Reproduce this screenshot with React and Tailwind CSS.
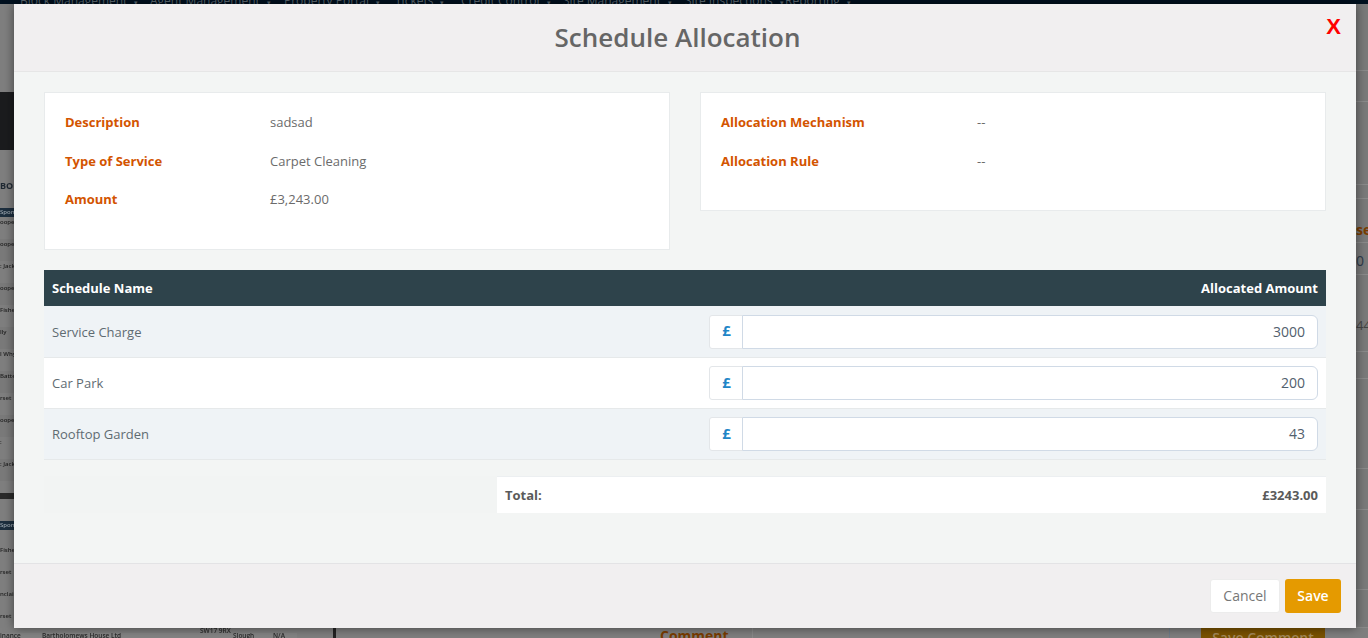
const labelClass = "text-[13px] font-bold text-[#d35400]";
const valueClass = "text-[13px] text-[#6b6b6b]";

const leftInfo = [
  ["Description", "sadsad", "h-[39px]"],
  ["Type of Service", "Carpet Cleaning", "h-[39px]"],
  ["Amount", "£3,243.00", "h-[38px]"],
];

const rightInfo = [
  ["Allocation Mechanism", "--", "h-[39px]"],
  ["Allocation Rule", "--", "h-[39px]"],
];

const schedules = [
  { name: "Service Charge", amount: "3000", bg: "bg-[#eff3f6]", h: "h-[52px]" },
  { name: "Car Park", amount: "200", bg: "bg-white", h: "h-[51px]" },
  { name: "Rooftop Garden", amount: "43", bg: "bg-[#eff3f6]", h: "h-[51px]" },
];

const navItems = [
  ["Block Management", "w-[130px]"],
  ["Agent Management", "w-[134px]"],
  ["Property Portal", "w-[111px]"],
  ["Tickets", "w-[66px]"],
  ["Credit Control", "w-[102px]"],
  ["Site Management", "w-[122px]"],
  ["Site Inspections", "w-[100px]"],
  ["Reporting", "w-[80px]"],
];

const firstRows = ["ooper", "ooper", ": Jack", "ooper", "Fisher", "lly", "l Whyt", "Batten", "rset", "ooper", ":", ": Jack"];
const secondRows = ["Fisher", "rset", "nclair", "rset"];

// right hand strip of the page behind the modal
const rightBands = [
  { h: "h-[67px]" },
  { h: "h-[31px]" },
  { h: "h-[83px]" },
  { h: "h-[14px]" },
  { h: "h-[44px]", text: "se", cls: "font-bold text-[14px] text-[#7a3c00] pt-[23px]" },
  { h: "h-[32px]", text: "0", cls: "text-[14px] text-[#2d3a4a] pt-[10px]" },
  { h: "h-[77px]", text: "44", cls: "text-[13px] text-[#444] pt-[42px]" },
  { h: "h-[27px]" },
  { h: "h-[90px]" },
  { h: "h-[41px]" },
  { h: "h-[80px]" },
  { h: "h-[38px]" },
];

const Backdrop = () => (
  <div className="h-full flex flex-col bg-[#7f7f7f]">
    <div className="h-1 shrink-0 bg-[#00101f] overflow-hidden pl-5 flex text-xs leading-[1px] text-[#5f6a73] whitespace-nowrap">
      {navItems.map(([item, width]) => (
        <span key={item} className={`${width} shrink-0`}>
          {item}
          <span className="ml-[7px] text-[7px]">▾</span>
        </span>
      ))}
    </div>

    <div className="h-[624px] shrink-0 flex justify-between">
      <div className="w-[14px] overflow-hidden text-[6px] font-semibold text-[#222] whitespace-nowrap blur-[0.4px]">
        <div className="h-[58px] mt-[88px] bg-[#1b1c1e]"></div>
        <div className="mt-[30px] text-[9px] font-bold leading-3 text-[#1f2933]">BOL</div>
        <div className="mt-[16px] h-[9px] bg-[#1d2f3f] text-[#9aa5ae] leading-[9px]">Spons</div>
        {firstRows.map((row, i) => (
          <div key={i} className={`h-[22px] leading-[6px] pt-[2px] ${i % 2 ? "bg-[#7a7a7a]" : ""}`}>{row}</div>
        ))}
        <div className="mt-[12px] h-[6px] bg-[#2a2a2a]"></div>
        <div className="mt-[22px] h-[9px] bg-[#1d2f3f] text-[#9aa5ae] leading-[9px]">Spons</div>
        {secondRows.map((row, i) => (
          <div key={i} className="h-[22px] leading-[6px] pt-[17px]">{row}</div>
        ))}
      </div>

      <div className="w-3 overflow-hidden whitespace-nowrap bg-[#7a7a7a]">
        {rightBands.map((band, i) => (
          <div key={i} className={`${band.h} ${band.cls || ""} leading-4 border-b border-[#8b8b8b]`}>{band.text}</div>
        ))}
      </div>
    </div>

    <div className="h-[10px] shrink-0 flex overflow-hidden whitespace-nowrap">
      <div className="w-[333px] shrink-0 text-[6.5px] font-semibold text-[#2a2a2a] blur-[0.4px]">
        <div className="h-[5px] pl-[200px] leading-[5px]">SW17 9RX</div>
        <div className="h-[5px] w-[297px] bg-[#848484] flex leading-[6px]">
          <span className="w-[42px]">inance</span>
          <span className="w-[191px]">Bartholomews House Ltd</span>
          <span className="w-10">Slough</span>
          <span>N/A</span>
        </div>
      </div>
      <div className="w-[3px] shrink-0 bg-[#222]"></div>
      <div className="w-[417px] shrink-0 pl-[324px] -mt-[2px] text-sm font-bold leading-5 text-[#7a3c00] border-r border-[#8a8a8a]">
        Comment
      </div>
      <div className="w-[417px] shrink-0 border-r border-[#6f7c88]"></div>
      <div className="ml-[31px] w-[124px] shrink-0 bg-[#7a5200] text-center text-sm font-semibold leading-5 text-[#a58a5c]">
        Save Comment
      </div>
    </div>
  </div>
);

const InfoCard = ({ rows, labelWidth, height }) => (
  <div className={`w-[626px] ${height} bg-white border border-[#e8ebec] pl-5 pt-[10px]`}>
    {rows.map(([label, value, rowHeight]) => (
      <div key={label} className={`flex items-center ${rowHeight}`}>
        <div className={`${labelWidth} ${labelClass}`}>{label}</div>
        <div className={valueClass}>{value}</div>
      </div>
    ))}
  </div>
);

const ScheduleRow = ({ row }) => (
  <div className={`${row.h} ${row.bg} border-b border-[#e6e9ea] flex items-center justify-between pl-2 pr-2`}>
    <span className="pt-[2px] text-[13px] text-[#5f6b72]">{row.name}</span>
    <div className="flex w-[609px] h-[34px]">
      <div className="w-[34px] shrink-0 pb-[2px] pl-px bg-white border border-[#e3e6e9] rounded-l-[3px] flex items-center justify-center text-[15px] font-bold text-[#1f86c7]">
        £
      </div>
      <input
        readOnly
        value={row.amount}
        className="flex-1 min-w-0 -ml-px bg-white border border-[#d0dae6] rounded-r-[6px] px-3 text-right text-sm text-[#52606d] outline-none"
      />
    </div>
  </div>
);

const App = () => {
  return (
    <div className="relative h-screen overflow-hidden font-['Open_Sans',sans-serif]">
      <Backdrop />
      <div className="absolute left-[14px] top-1 w-[1342px] h-[624px] flex flex-col bg-[#f3f5f4] shadow-[0_0_10px_rgba(0,0,0,0.5)]">
        <div className="relative h-[68px] shrink-0 flex items-center justify-center pr-[15px] bg-[#f1eff0] border-b border-[#e6e6e6]">
          <h2 className="text-[26px] font-semibold text-[#666]">Schedule Allocation</h2>
          <button className="absolute right-[15px] top-[9px] text-[22px] leading-7 font-bold text-[#ff0000] font-['Liberation_Sans',sans-serif]">
            X
          </button>
        </div>

        <div className="flex-1 px-[30px] pt-5">
          <div className="flex items-start justify-between">
            <InfoCard rows={leftInfo} labelWidth="w-[205px]" height="h-[158px]" />
            <InfoCard rows={rightInfo} labelWidth="w-[256px]" height="h-[119px]" />
          </div>

          <div className="mt-5 h-9 pt-[2px] bg-[#2e434b] flex items-center justify-between px-2 text-[13px] font-bold text-white">
            <span>Schedule Name</span>
            <span>Allocated Amount</span>
          </div>
          {schedules.map((row) => (
            <ScheduleRow key={row.name} row={row} />
          ))}

          <div className="mt-4 flex h-[37px]">
            <div className="w-[453px] bg-[#f2f4f3]"></div>
            <div className="flex-1 pt-[2px] bg-white border-t border-[#eceff1] flex items-center justify-between px-2 text-[13px] font-bold text-[#5a5a5a]">
              <span>Total:</span>
              <span>£3243.00</span>
            </div>
          </div>
        </div>

        <div className="h-[65px] shrink-0 flex items-center justify-end gap-[5px] pr-[15px] bg-[#f1eff0] border-t border-[#e3e3e5]">
          <button className="w-[70px] h-[34px] bg-white border border-[#ececec] rounded-[3px] text-sm text-[#777]">Cancel</button>
          <button className="w-14 h-[34px] bg-[#e59a00] rounded-[3px] text-sm font-semibold text-white">Save</button>
        </div>
      </div>
    </div>
  );
};

export default App;
